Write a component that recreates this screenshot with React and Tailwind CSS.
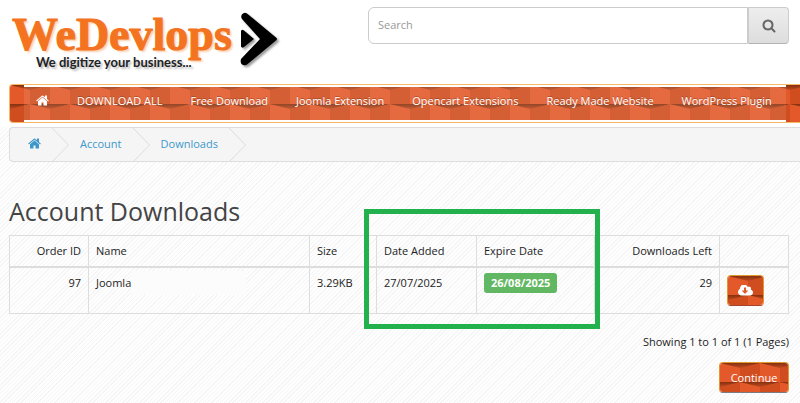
import { useId } from 'react';

const ICONS = {
  home: {
    box: '64 190 1664 1400',
    d: 'M1472 992v480q0 26-19 45t-45 19h-384v-384h-256v384h-384q-26 0-45-19t-19-45v-480q0-1 .5-3t.5-3l575-474 575 474q1 2 1 6zm223-69l-62 74q-8 9-21 11h-3q-13 0-21-7l-692-577-692 577q-12 8-24 7-13-2-21-11l-62-74q-8-10-7-23.5t11-21.5l719-599q32-26 76-26t76 26l244 204v-195q0-14 9-23t23-9h192q14 0 23 9t9 23v408l219 182q10 8 11 21.5t-7 23.5z',
  },
  search: {
    box: '0 64 1792 1792',
    d: 'M1216 832q0-185-131.5-316.5t-316.5-131.5-316.5 131.5-131.5 316.5 131.5 316.5 316.5 131.5 316.5-131.5 131.5-316.5zm512 832q0 52-38 90t-90 38q-54 0-90-38l-343-342q-179 124-399 124-143 0-273.5-55.5t-225-150-150-225-55.5-273.5 55.5-273.5 150-225 225-150 273.5-55.5 273.5 55.5 225 150 150 225 55.5 273.5q0 220-124 399l343 343q37 37 37 90z',
  },
  download: {
    box: '-64 192 1920 1408',
    d: 'M1216 928q0-14-9-23t-23-9h-224v-352q0-13-9.5-22.5t-22.5-9.5h-192q-13 0-22.5 9.5t-9.5 22.5v352h-224q-13 0-22.5 9.5t-9.5 22.5q0 14 9 23l352 352q9 9 23 9t23-9l351-351q10-12 10-24zm640 224q0 159-112.5 271.5t-271.5 112.5h-1088q-185 0-316.5-131.5t-131.5-316.5q0-130 70-240t188-165q-2-30-2-43 0-212 150-362t362-150q156 0 285.5 87t188.5 231q71-62 166-62 106 0 181 75t75 181q0 76-41 138 130 31 213.5 135.5t83.5 238.5z',
  },
};

const MENU = [
  'DOWNLOAD ALL',
  'Free Download',
  'Joomla Extension',
  'Opencart Extensions',
  'Ready Made Website',
  'WordPress Plugin',
];

const Icon = ({ name, className }) => (
  <svg viewBox={ICONS[name].box} className={className} fill="currentColor" aria-hidden="true">
    <path d={ICONS[name].d} />
  </svg>
);

// Folded paper texture behind the menu and the buttons
const Facets = () => {
  const id = useId();
  return (
    <svg className="absolute inset-0 w-full h-full" aria-hidden="true">
      <defs>
        <linearGradient id={`${id}s`} x1="0" y1="0" x2="0" y2="1">
          <stop offset="0" stopColor="#85310f" />
          <stop offset="1" stopColor="#bf4a1f" />
        </linearGradient>
        <pattern id={`${id}p`} width="40" height="40" patternUnits="userSpaceOnUse">
          <rect width="20" height="20" fill="#e3592a" />
          <rect x="20" width="20" height="20" fill="#d04d1f" />
          <rect y="20" width="20" height="20" fill="#d04d1f" />
          <rect x="20" y="20" width="20" height="20" fill="#e3592a" />
          <path d="M0 0H40L20 5z" fill={`url(#${id}s)`} />
          <path d="M0 19H20L0 24zM40 19H20L40 24z" fill={`url(#${id}s)`} />
        </pattern>
      </defs>
      <rect width="100%" height="100%" fill={`url(#${id}p)`} />
    </svg>
  );
};

const Logo = () => (
  <a href="#" className="block w-[274px] pl-1 pt-3">
    <span className="flex items-start">
      <span className="font-['Liberation_Serif',serif] font-bold text-[46px] leading-[46px] text-[#f47321] [-webkit-text-stroke:1px_#f47321] [text-shadow:2px_2px_2px_#f9cfae]">
        WeDevlops
      </span>
      <svg viewBox="0 0 38 54" className="w-[38px] h-[54px] ml-2 shrink-0 drop-shadow-[2px_2px_1px_#999]" aria-hidden="true">
        <path d="M3 1.5Q5 0 7 1.500L36 25.500Q38 27 36 28.500L7 52.500Q5 54 2 52.500Q0 51 1 47L20 27L2 7Q0 3.500 3 1.500z" />
        <path d="M1 19Q2 17 4 18.500L14 27L4 35Q2 36.500 1 34.500z" />
      </svg>
    </span>
    <span className="block -mt-3 pl-6 font-['Lato',sans-serif] font-bold text-[13px] leading-4 text-[#222] whitespace-nowrap [text-shadow:2px_2px_2px_#bbb]">
      We digitize your business...
    </span>
  </a>
);

const Header = () => (
  <header className="flex items-start justify-between h-[84px] pl-2 pr-[11px]">
    <Logo />
    <form className="flex w-[421px] h-[37px] mt-[7px]">
      <input
        type="text"
        aria-label="Search"
        placeholder="Search"
        className="flex-1 min-w-0 px-[9px] text-[11px] bg-white border border-[#ccc] rounded-l-md placeholder:text-[#999] outline-none"
      />
      <button
        type="button"
        aria-label="Search"
        className="w-[41px] flex items-center justify-center rounded-r border border-[#ccc] border-b-[#b3b3b3] bg-linear-to-b from-[#eee] to-[#ddd] text-[#666]"
      >
        <Icon name="search" className="w-[14px] h-[14px]" />
      </button>
    </form>
  </header>
);

const Menu = () => (
  <nav className="relative ml-[9px] h-[39px] rounded-l-[4px] overflow-hidden border-y border-l border-[#f8b765] text-white">
    <Facets />
    <div className="relative h-full mx-[14px] border-y-2 border-white bg-white/10 flex items-center pl-3 pb-1.5 gap-7 text-[11px] leading-4 whitespace-nowrap [text-shadow:0_-1px_0_rgba(0,0,0,0.25)]">
      <a href="#" aria-label="Home">
        <Icon name="home" className="w-[13px] h-[11px]" />
      </a>
      {MENU.map((item) => (
        <a key={item} href="#">
          {item}
        </a>
      ))}
    </div>
  </nav>
);

const Chevron = () => (
  <svg viewBox="0 0 17 34" className="w-[17px] h-[34px] shrink-0" fill="none" stroke="#ddd" aria-hidden="true">
    <path d="M0 0L16.500 17L0 34" />
  </svg>
);

const Breadcrumb = () => (
  <nav className="ml-[9px] h-[35px] flex items-center rounded-l-[4px] border-y border-l border-[#ddd] bg-[#f5f5f5] text-[11px] leading-4 text-[#3d97cb]">
    <a href="#" aria-label="Home" className="pl-[18px] pr-[11px] pb-0.5">
      <Icon name="home" className="w-[13px] h-[11px]" />
    </a>
    <Chevron />
    <a href="#" className="px-[11px] pb-0.5">
      Account
    </a>
    <Chevron />
    <a href="#" className="px-[11px] pb-0.5">
      Downloads
    </a>
    <Chevron />
  </nav>
);

const DownloadsTable = () => (
  <div className="relative">
    <table className="w-full table-fixed border-collapse text-[11px] leading-4 [&_td]:border [&_th]:border [&_td]:border-[#ddd] [&_th]:border-[#ddd] [&_td]:p-[7px] [&_th]:p-[7px] [&_th]:font-normal [&_td]:align-top">
      <thead>
        <tr className="text-left border-b-2 border-[#ddd]">
          <th className="w-[79px] text-right">Order ID</th>
          <th>Name</th>
          <th className="w-[67px]">Size</th>
          <th className="w-[100px]">Date Added</th>
          <th className="w-[118px]">Expire Date</th>
          <th className="w-[125px] text-right">Downloads Left</th>
          <th className="w-[69px]" aria-label="Action"></th>
        </tr>
      </thead>
      <tbody>
        <tr>
          <td className="text-right">97</td>
          <td>
            <div className="flex">
              Joomla
              <span className="flex-1 h-6 -mt-1 mr-14 bg-[#fcfcfc]"></span>
            </div>
          </td>
          <td>3.29KB</td>
          <td>27/07/2025</td>
          <td>
            <span className="inline-block -mt-1 px-[7px] py-[2px] rounded-[3px] bg-[#62b762] font-bold text-white">
              26/08/2025
            </span>
          </td>
          <td className="text-right">29</td>
          <td>
            <button
              type="button"
              aria-label="Download"
              className="relative w-[37px] h-[31px] flex items-center justify-center rounded-[4px] overflow-hidden border border-[#e0992a] border-b-[#a8452a] text-white"
            >
              <Facets />
              <Icon name="download" className="relative w-[15px] h-[11px]" />
            </button>
          </td>
        </tr>
      </tbody>
    </table>
    <div className="absolute -top-[26px] right-[189px] w-[236px] h-[120px] border-5 border-[#22b14c] pointer-events-none"></div>
  </div>
);

const App = () => {
  return (
    <div className="min-h-screen overflow-x-hidden font-['Open_Sans',sans-serif] text-[#222] bg-[repeating-linear-gradient(135deg,#fefefe_0px,#fefefe_2px,#f5f5f5_2px,#f5f5f5_3px)]">
      <div className="bg-white pb-1">
        <Header />
        <Menu />
      </div>
      <Breadcrumb />
      <main className="pl-[9px] pr-[11px] pt-[33px] pb-2">
        <h1 className="text-[25px] leading-8 text-[#444] mb-2">Account Downloads</h1>
        <DownloadsTable />
        <p className="mt-5 text-right text-[11px] leading-4">Showing 1 to 1 of 1 (1 Pages)</p>
        <div className="flex justify-end mt-3">
          <a
            href="#"
            className="relative w-[70px] h-[31px] flex items-center justify-center rounded-[4px] overflow-hidden border border-[#e0992a] border-b-[#7a7a80] text-white text-[11px] leading-4"
          >
            <Facets />
            <span className="relative">Continue</span>
          </a>
        </div>
      </main>
    </div>
  );
};

export default App;
